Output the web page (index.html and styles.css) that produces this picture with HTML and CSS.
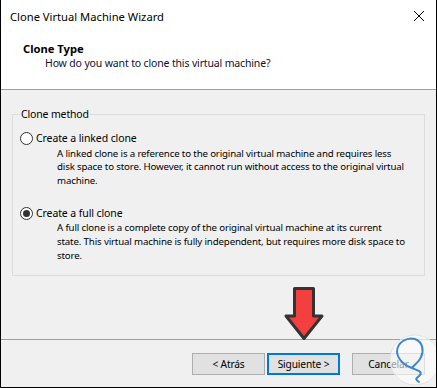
FILE: index.html
```html
<!doctype html>
<html>
    <head>
        <title>Clone Virtual Machine Wizard</title>
        <link rel="stylesheet" href="styles.css">
    </head>
    <body>
        <div class="window">
            <div class="titlebar">
                <span class="title">Clone Virtual Machine Wizard</span>
                <svg class="close" viewBox="0 0 20 20">
                    <path d="M5 5 L15 15 M15 5 L5 15" stroke="#000" stroke-width="1" fill="none"/>
                </svg>
            </div>
            <div class="header">
                <div class="h-title">Clone Type</div>
                <div class="h-sub">How do you want to clone this virtual machine?</div>
            </div>
            <div class="content">
                <fieldset class="group">
                    <legend>Clone method</legend>
                    <div class="option">
                        <div class="opt-label"><span class="radio"></span>Create a linked clone</div>
                        <p class="opt-desc">A linked clone is a reference to the original virtual machine and requires less disk space to store. However, it cannot run without access to the original virtual machine.</p>
                    </div>
                    <div class="option second">
                        <div class="opt-label"><span class="radio checked"></span>Create a full clone</div>
                        <p class="opt-desc">A full clone is a complete copy of the original virtual machine at its current state. This virtual machine is fully independent, but requires more disk space to store.</p>
                    </div>
                </fieldset>
            </div>
            <div class="footer">
                <button class="btn back">&lt; Atrás</button>
                <button class="btn next">Siguiente &gt;</button>
                <button class="btn">Cancelar</button>
            </div>

            <svg class="arrow" viewBox="0 0 46 60" width="46" height="60">
                <path d="M13.5 4.5 H32.5 V32 H41 L23 54.5 L5 32 H13.5 Z" fill="#f43f3f" stroke="#333" stroke-width="3" stroke-linejoin="round"/>
            </svg>
            <svg class="logo" viewBox="0 0 54 54" width="54" height="54">
                <circle cx="26" cy="26" r="25" fill="rgba(255,255,255,0.6)" stroke="#e2e2e2" stroke-width="1"/>
                <path d="M23 34 C16 32 9 26 8 18 C8 8 18 3 26 5 C34 8 35 17 32 23 C30 28 25 31 23 34 C27 36 34 37 31 41 C29 44 24 44 30 48" fill="none" stroke="#3f86c8" stroke-width="2" stroke-linecap="round"/>
            </svg>
        </div>
    </body>
</html>
```

FILE: styles.css
```css
body {
    margin: 0;
    font-family: "Noto Sans", sans-serif;
    font-size: 10.5px;
    background: #fff;
    overflow: hidden;
}

.window {
    position: relative;
    width: 437px;
    height: 388px;
    box-sizing: border-box;
    border: 1px solid #000;
    border-top: none;
    display: flex;
    flex-direction: column;
    overflow: hidden;
    background: #f0f0f0;
    color: #000;
}

.titlebar {
    height: 32px;
    display: flex;
    align-items: center;
    justify-content: space-between;
    padding-left: 9px;
    background: #fff;
    font-size: 11.2px;
}

.close {
    width: 20px;
    height: 20px;
    margin-right: 7px;
}

.header {
    height: 48px;
    padding: 9px 0 0 22px;
    background: #fff;
    border-bottom: 1px solid #a0a0a0;
}

.h-title {
    font-weight: bold;
    font-size: 11.2px;
    line-height: 15px;
}

.h-sub {
    padding-left: 22px;
    line-height: 15px;
    letter-spacing: -0.15px;
    color: #101030;
}

.content {
    height: 250px;
    box-sizing: border-box;
    padding: 17px 11px 0 11px;
    border-bottom: 1px solid #a0a0a0;
}

.group {
    margin: 0;
    padding: 10px 7px 0 7px;
    height: 169px;
    box-sizing: border-box;
    border: 1px solid #dcdcdc;
}

.group legend {
    padding: 0 1px;
    line-height: 14px;
    letter-spacing: -0.15px;
}

.opt-label {
    display: flex;
    align-items: center;
    line-height: 15px;
    letter-spacing: -0.1px;
}

.second {
    margin-top: 18px;
}

.radio {
    width: 13px;
    height: 13px;
    box-sizing: border-box;
    border: 1px solid #333;
    border-radius: 50%;
    background: #fff;
    margin-right: 3px;
    display: flex;
    align-items: center;
    justify-content: center;
}

.radio.checked::after {
    content: "";
    width: 7px;
    height: 7px;
    border-radius: 50%;
    background: #333;
}

.opt-desc {
    margin: 0.5px 12px 0 37px;
    font-size: 9.7px;
    letter-spacing: -0.15px;
    line-height: 13.7px;
}

.footer {
    flex: 1;
    display: flex;
    justify-content: flex-end;
    align-items: flex-start;
    padding: 13px 11px 0 0;
}

.btn {
    width: 73px;
    height: 22px;
    box-sizing: border-box;
    padding: 0;
    font-family: inherit;
    font-size: 10.2px;
    letter-spacing: -0.15px;
    color: #000;
    background: #e1e1e1;
    border: 1px solid #adadad;
}

.back {
    margin-right: 2px;
}

.next {
    margin-right: 12px;
    border: 2px solid #0078d7;
}

.arrow {
    position: absolute;
    left: 280px;
    top: 284px;
}

.logo {
    position: absolute;
    left: 388px;
    top: 334px;
}
```
